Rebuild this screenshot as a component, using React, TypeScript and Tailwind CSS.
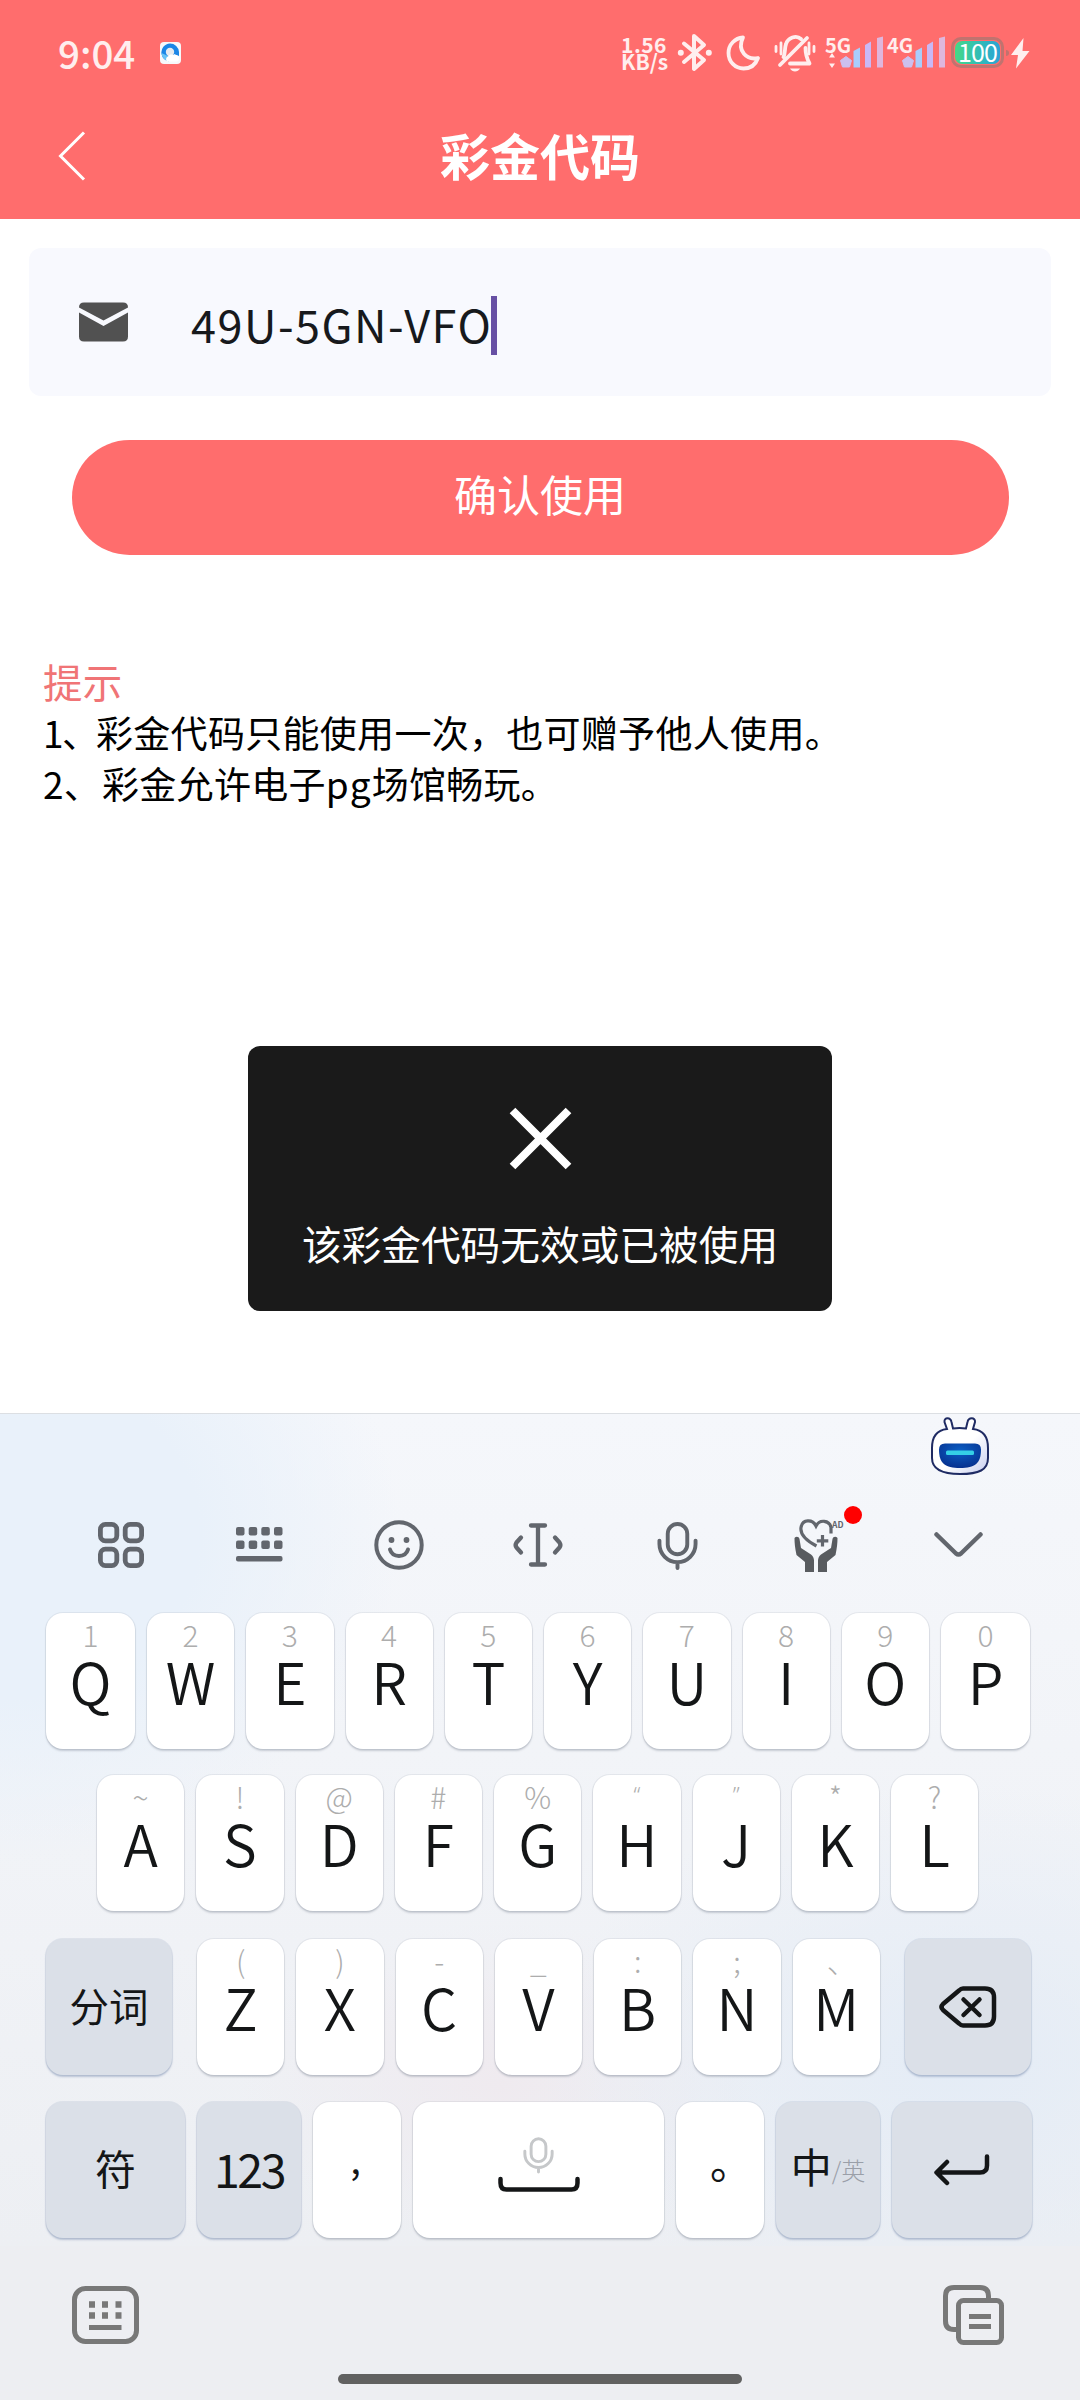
import React from "react";

type KeyDef = [letter: string, hint: string];

const ROW1: KeyDef[] = [
  ["Q", "1"], ["W", "2"], ["E", "3"], ["R", "4"], ["T", "5"],
  ["Y", "6"], ["U", "7"], ["I", "8"], ["O", "9"], ["P", "0"],
];
const ROW2: KeyDef[] = [
  ["A", "~"], ["S", "!"], ["D", "@"], ["F", "#"], ["G", "%"],
  ["H", "“"], ["J", "”"], ["K", "*"], ["L", "?"],
];
const ROW3: KeyDef[] = [
  ["Z", "("], ["X", ")"], ["C", "-"], ["V", "_"], ["B", ":"], ["N", ";"], ["M", "、"],
];

const WHITE_KEY =
  "h-[136px] rounded-[17px] bg-white shadow-[0_0_0_1px_rgba(120,130,150,0.12),0_2px_2px_rgba(90,100,120,0.28)]";
const GRAY_KEY =
  "flex h-[136px] items-center justify-center rounded-[17px] bg-[#dbe0e8] text-[#141617] shadow-[0_0_0_1px_rgba(150,165,190,0.2),0_2px_2px_rgba(120,140,175,0.45)]";

function hintStyle(hint: string) {
  if (hint === "“" || hint === "”") return "font-['Noto_Sans'] text-[22px] leading-[26px]";
  if (hint === "、") return "pl-[11px] text-[30px] leading-[30px]";
  return "text-[30px] leading-[30px]";
}

function LetterKey({ letter, hint, wide = false }: { letter: string; hint: string; wide?: boolean }) {
  return (
    <div className={`${WHITE_KEY} flex shrink-0 flex-col items-center pt-[6px] ${wide ? "w-[89px]" : "w-[87.250px]"}`}>
      <span className={`h-[30px] font-light text-[#adadad] ${hintStyle(hint)}`}>{hint}</span>
      <span className="mt-[2px] h-[58px] text-[57px] leading-[58px] font-[350] text-[#141617]">{letter}</span>
    </div>
  );
}

function SignalBars() {
  return (
    <svg className="block h-[32px] w-[46px]" viewBox="0 0 46 32">
      <path d="M8 20.500 13.500 24.500 11.500 31H4.500L2.500 24.500Z" fill="#ccc0ee" stroke="#ccc0ee" strokeWidth="1" strokeLinejoin="round" />
      <path d="M15.500 15 22 11.500V31.500H15.500Z" fill="#a9cdfb" />
      <path d="M27 9 33 5.500V31.500H27Z" fill="#c9b8f5" />
      <path d="M39 2 45 .5V31.500H39Z" fill="#dfb6dc" />
    </svg>
  );
}

function StatusBar() {
  return (
    <div className="flex h-[92px] items-start text-[#ffeeee]">
      <div className="ml-[58px] mt-[33px] w-[83px] text-[38.500px] leading-[38px] font-medium">9:04</div>
      <svg className="ml-[19px] mt-[42px] h-[22px] w-[21px]" viewBox="0 0 21 22">
        <rect width="21" height="22" rx="4" fill="#f7f8fa" />
        <path d="M1.500 12A9 9 0 0 1 10 1.500 9 9 0 0 1 19 10v4l-5-2-6 7A9 9 0 0 1 1.500 12Z" fill="#1b86e6" />
        <path d="M1.500 11A9 9 0 0 0 9 19.500L8 14Z" fill="#67c3f7" />
        <circle cx="10" cy="10" r="4.200" fill="#e6eaef" />
        <path d="M7 19.500a3 3 0 0 1 1-5 4 4 0 0 1 6-1 3 3 0 0 1 3 6Z" fill="#fff" />
      </svg>
      <div className="ml-[440px] mt-[36px] w-[50px] text-[21px] leading-[17px] font-bold">
        <div className="tracking-[0.5px]">1.56</div>
        <div>KB/s</div>
      </div>
      <svg className="ml-[6px] mt-[33px] h-[40px] w-[36px]" viewBox="0 0 36 40" fill="none" stroke="currentColor" strokeWidth="4" strokeLinejoin="round" strokeLinecap="round">
        <path d="M7 10.500 27 27 17 36V3L27 12 7 29" />
        <path d="M3.800 19.800h.01M31.800 19.800h.01" strokeWidth="6" />
      </svg>
      <svg className="ml-[12px] mt-[34px] h-[38px] w-[36px]" viewBox="0 0 36 38" fill="none" stroke="currentColor" strokeWidth="3.800" strokeLinejoin="round">
        <path d="M18 3.500C10 4 3.500 10.500 3.500 19S10 34.500 18.500 34.500c6.500 0 12-3.500 14.500-10.500C22 26.500 11.500 17 18 3.500Z" />
      </svg>
      <svg className="ml-[12px] mt-[33px] h-[40px] w-[44px]" viewBox="0 0 44 40" fill="none" stroke="currentColor" strokeWidth="3.800" strokeLinecap="round" strokeLinejoin="round">
        <path d="M34 5 7 32M10.500 24c2-4 1-9 2.500-13C15 5 23 1.500 28 6M32.500 15c0 6 .5 9 4 15.500H17" />
        <path d="M3 13.500v5M8 10v11M41 13.500v5M36 10v11" strokeWidth="2.800" />
        <path d="M17 35.500h10c-2 4-8 4-10 0Z" fill="currentColor" stroke="none" />
      </svg>
      <div className="relative ml-[9px] mt-[36px] h-[32px] w-[60px]">
        <div className="absolute left-[-1px] top-[-1px] text-[20px] leading-[20px] font-bold">5G</div>
        <svg className="absolute left-[3px] top-[17px] h-[15px] w-[6px]" viewBox="0 0 6 15" fill="currentColor">
          <path d="M3 0 6 4.500H0ZM3 15 0 10.500h6Z" />
        </svg>
        <div className="absolute left-[12px] top-0"><SignalBars /></div>
      </div>
      <div className="relative ml-[2px] mt-[36px] h-[32px] w-[60px]">
        <div className="absolute left-[-1px] top-[-1px] text-[20px] leading-[20px] font-bold">4G</div>
        <div className="absolute left-[12px] top-0"><SignalBars /></div>
      </div>
      <div className="ml-[3px] mt-[37px] flex h-[31px] w-[53px] items-center justify-center rounded-[10px] border-[3px] border-[#c0736f]">
        <div className="flex h-[23px] w-[45px] items-center justify-center rounded-[7px] bg-gradient-to-r from-[#46d884] to-[#2aa2d6] text-[25px] leading-[23px] font-normal text-white">
          <span className="-mt-[3px] tracking-[-0.8px]">100</span>
        </div>
      </div>
      <div className="ml-[2px] mt-[50px] h-[6px] w-[3px] rounded-r bg-[#c0736f]" />
      <svg className="ml-[2px] mt-[38px] h-[31px] w-[19px]" viewBox="0 0 19 31" fill="currentColor">
        <path d="M12.500 0 0 17h7L5 30.500 18.500 13H11.500Z" />
      </svg>
    </div>
  );
}

function MicGlyph({ className }: { className: string }) {
  return (
    <svg className={className} viewBox="0 0 42 50" fill="none" stroke="currentColor" strokeWidth="4" strokeLinecap="round">
      <rect x="11" y="3" width="20" height="31" rx="10" />
      <path d="M2.500 20v3.500a18.500 18.500 0 0 0 37 0V20M21 42v6" />
    </svg>
  );
}

function Toolbar() {
  return (
    <div className="flex h-[72px] items-center pl-[51px] text-[#62666d]">
      <div className="flex w-[139.200px] justify-center">
        <svg className="h-[46px] w-[46px]" viewBox="0 0 46 46" fill="none" stroke="currentColor" strokeWidth="4.800">
          <rect x="2.400" y="2.400" width="16.400" height="16.400" rx="5" />
          <rect x="27.200" y="2.400" width="16.400" height="16.400" rx="5" />
          <rect x="2.400" y="27.200" width="16.400" height="16.400" rx="5" />
          <rect x="27.200" y="27.200" width="16.400" height="16.400" rx="5" />
        </svg>
      </div>
      <div className="flex w-[139.200px] justify-center">
        <svg className="h-[36px] w-[47px]" viewBox="0 0 47 36" fill="currentColor">
          {[0, 12.700, 25.300, 38].map((x) => (
            <g key={x}>
              <rect x={x} y="0" width="8.500" height="8.500" rx="2" />
              <rect x={x} y="13.500" width="8.500" height="8.500" rx="2" />
            </g>
          ))}
          <rect y="29" width="46.500" height="5.500" rx="2" />
        </svg>
      </div>
      <div className="flex w-[139.200px] justify-center">
        <svg className="h-[50px] w-[50px]" viewBox="0 0 50 50" fill="none" stroke="currentColor" strokeWidth="4" strokeLinecap="round">
          <circle cx="25" cy="25" r="22.700" />
          <path d="M16 29.500c2.500 8.500 15.500 8.500 18 0" />
          <circle cx="17.500" cy="20" r="2.900" fill="currentColor" stroke="none" />
          <circle cx="32.500" cy="20" r="2.900" fill="currentColor" stroke="none" />
        </svg>
      </div>
      <div className="flex w-[139.200px] justify-center">
        <svg className="h-[44px] w-[52px]" viewBox="0 0 52 44" fill="none" stroke="currentColor" strokeWidth="4.300" strokeLinecap="round" strokeLinejoin="round">
          <path d="M19 2.500h14M26 2.500v39M19 41.500h14" />
          <path d="M9 14.500 4.500 19.500q-1.800 2.500 0 5L9 29.500M43 14.500l4.500 5q1.800 2.500 0 5L43 29.500" />
        </svg>
      </div>
      <div className="flex w-[139.200px] justify-center">
        <MicGlyph className="h-[49px] w-[41px]" />
      </div>
      <div className="relative flex w-[138px] justify-center">
        <svg className="h-[54px] w-[44px]" viewBox="0 0 44 54">
          <path d="M22.500 28C12 22.500 6 16 7 9.500 8.500 1 18.500 1 22 8c3.500-7 13.500-6 15 1.500v6" fill="none" stroke="#62666d" strokeWidth="3.200" />
          <path d="M28.500 17v11.500M22.800 22.800h11.500" stroke="#62666d" strokeWidth="3.200" />
          <path d="M.5 20C2 18 5 18.500 5.500 21l1.500 9 10 6.500c2 1.500 3 4 3 6V54H11V44L2.500 37C1 30 .5 25 .5 20ZM43.500 20c-1.500-2-4.500-1.500-5 1l-1.500 9-10 6.500c-2 1.500-3 4-3 6V54H33V44l8.500-7c1.500-7 2-12 2-17Z" fill="#585b5f" />
        </svg>
        <span className="absolute left-[85px] top-[1px] text-[8.500px] leading-[10px] font-bold text-[#62666d]">AD</span>
        <div className="absolute left-[97px] top-[-12px] h-[18px] w-[18px] rounded-full bg-[#ff0000]" />
      </div>
      <div className="flex w-[148px] justify-center">
        <svg className="h-[26px] w-[49px]" viewBox="0 0 49 26" fill="none" stroke="currentColor" strokeWidth="4.500" strokeLinecap="round" strokeLinejoin="round">
          <path d="M2.500 2.500 22 21.500q2.500 2 5 0L46.500 2.500" />
        </svg>
      </div>
    </div>
  );
}

function Robot() {
  return (
    <svg className="ml-[931px] block h-[58px] w-[58px]" viewBox="0 0 58 58">
      <defs>
        <radialGradient id="visor" cx="50%" cy="30%" r="70%">
          <stop offset="0" stopColor="#0c5fc4" />
          <stop offset="1" stopColor="#06308f" />
        </radialGradient>
        <linearGradient id="shell" x1="0" y1="0" x2="1" y2="1">
          <stop offset="0.550" stopColor="#ffffff" />
          <stop offset="1" stopColor="#c6cdef" />
        </linearGradient>
      </defs>
      <path d="M16 12 13.500 5c-.5-5 6-5 7 0L22 11.500c4-.5 9-.5 13 0L36.500 5c1-5 8-5 7.500 0L42 12c9 1 15 7 15 19v10c0 12-9 16-28 16S1 52 1 41V31C1 19 7 13 16 12Z" fill="url(#shell)" stroke="#1f2b63" strokeWidth="2" />
      <path d="M14 26.500h30q6 0 6 6c0 14-6 18.500-21 18.500S8 46.500 8 32.500q0-6 6-6Z" fill="url(#visor)" />
      <rect x="15" y="33.500" width="28" height="4.500" rx="1.500" fill="#35d0e6" />
    </svg>
  );
}

function Keyboard() {
  return (
    <div className="h-[987px] border-t border-[#dcdfe3] bg-[#edeef2]">
      <div className="h-[832px] pt-[3px] bg-[radial-gradient(ellipse_400px_330px_at_0px_120px,#e9f1fa_0%,#e9f1fa_50%,rgba(233,241,250,0)_100%),radial-gradient(ellipse_420px_280px_at_960px_650px,#e4ecf6_0%,rgba(228,236,246,0)_100%),radial-gradient(ellipse_260px_160px_at_500px_670px,#efeaef_0%,rgba(239,234,239,0)_100%),linear-gradient(180deg,#f5f7fb_0%,#f2f4f8_40%,#edeff3_100%)]">
        <Robot />
        <div className="h-[34px]" />
        <Toolbar />
        <div className="mt-[32px] flex gap-[12px] pl-[46px]">
          {ROW1.map(([l, h], i) => <LetterKey key={l} letter={l} hint={h} wide={i === 0 || i === 9} />)}
        </div>
        <div className="mt-[26px] flex gap-[12px] pl-[97px]">
          {ROW2.map(([l, h]) => <LetterKey key={l} letter={l} hint={h} />)}
        </div>
        <div className="mt-[28px] flex gap-[12px] pl-[46px]">
          <div className={`${GRAY_KEY} mr-[13px] w-[126px] pb-[5px] text-[39.500px] leading-[39px]`}>分词</div>
          {ROW3.map(([l, h]) => <LetterKey key={l} letter={l} hint={h} />)}
          <div className={`${GRAY_KEY} ml-[13px] w-[126px]`}>
            <svg className="h-[42px] w-[58px]" viewBox="0 0 58 42" fill="none" stroke="currentColor" strokeWidth="4.500" strokeLinecap="round" strokeLinejoin="round">
              <path d="M24 2.500H46q9 0 9 9v19q0 9-9 9H24q-2 0-4-2L4 24q-3-3 0-6L20 4.500q2-2 4-2Z" />
              <path d="m24.500 13.500 16 15.500m0-15.500L24.500 29" />
            </svg>
          </div>
        </div>
        <div className="mt-[27px] flex gap-[12px] pl-[46px]">
          <div className={`${GRAY_KEY} w-[139px] pb-[4px] text-[41px]`}>符</div>
          <div className={`${GRAY_KEY} w-[104px] pb-[5px] text-[46.500px] tracking-[-2.500px]`}>123</div>
          <div className={`${WHITE_KEY} w-[88px] pt-[35px] pr-[3px] text-center text-[38px] leading-[42px] text-[#141617]`}>,</div>
          <div className={`${WHITE_KEY} flex w-[251px] flex-col items-center pt-[34px]`}>
            <MicGlyph className="h-[38px] w-[31px] text-[#c6c8ca]" />
            <svg className="mt-[2px] h-[17px] w-[82px]" viewBox="0 0 82 17" fill="none" stroke="#141617" strokeWidth="4.500" strokeLinecap="round">
              <path d="M2.500 3v4q0 6.500 6 6.500h65q6 0 6-6.500V3" />
            </svg>
          </div>
          <div className={`${WHITE_KEY} w-[88px] pl-[34px] pt-[38px] text-[42px] leading-[42px] text-[#141617]`}>。</div>
          <div className={`${GRAY_KEY} w-[104px] pb-[11px]`}>
            <span className="text-[41px] leading-[40px]">中</span>
            <span className="mt-[10px] text-[24px] leading-[24px] font-light text-[#9a9fa8]">/英</span>
          </div>
          <div className={`${GRAY_KEY} w-[140px]`}>
            <svg className="h-[32px] w-[56px]" viewBox="0 0 56 32" fill="none" stroke="currentColor" strokeWidth="4.500" strokeLinecap="round" strokeLinejoin="round">
              <path d="M53 2.500v9q0 7-7 7H3M13 8 2.500 18.500 13 29" />
            </svg>
          </div>
        </div>
      </div>
      <div className="flex justify-between pl-[72px] pr-[76px] pt-[39px] text-[#787878]">
        <svg className="mt-[1px] h-[58px] w-[67px]" viewBox="0 0 67 58" fill="none" stroke="currentColor" strokeWidth="5">
          <rect x="2.500" y="2.500" width="62" height="53" rx="11" />
          <path d="M17 18.500h6M30 18.500h6M43.500 18.500h6M17 29.500h6M30 29.500h6M43.500 29.500h6" strokeWidth="6.300" />
          <path d="M17 41.500h32.500" />
        </svg>
        <svg className="h-[60px] w-[61px]" viewBox="0 0 61 60" fill="none" stroke="currentColor" strokeWidth="5">
          <rect x="15.500" y="15.500" width="43" height="42" rx="5" />
          <path d="M45.500 15V11q0-8.500-8.500-8.500H11Q2.500 2.500 2.500 11V36q0 8.500 8.500 8.500h4M26 31.500h22M26 41.500h22" />
        </svg>
      </div>
      <div className="mx-auto mt-[29px] h-[10px] w-[404px] rounded-full bg-[#616161]" />
    </div>
  );
}

export default function App() {
  return (
    <div className="relative flex h-[2400px] w-[1080px] flex-col overflow-hidden bg-white font-['Noto_Sans_CJK_SC',sans-serif]">
      <header className="h-[219px] bg-[#ff6d6d]">
        <StatusBar />
        <div className="relative flex h-[127px] items-center justify-center">
          <svg className="absolute left-[58px] top-[39px] h-[50px] w-[28px]" viewBox="0 0 28 50" fill="none" stroke="#fff" strokeWidth="3">
            <path d="M26 1.500 2.500 25 26 48.500" />
          </svg>
          <h1 className="-mt-[4px] text-[50px] leading-[56px] font-bold text-white">彩金代码</h1>
        </div>
      </header>

      <main className="flex-1">
        <div className="mx-[29px] mt-[29px] flex h-[148px] items-center rounded-[12px] bg-[#f8f9fe] pl-[50px]">
          <svg className="h-[40px] w-[49px]" viewBox="0 0 49 40" fill="#515151">
            <path d="M0 5.500Q0 .5 5 .5H44q5 0 5 5L24.500 18.500Z" />
            <path d="M0 10.500 24.500 24 49 10.500V34.500q0 5-5 5H5q-5 0-5-5Z" />
          </svg>
          <span className="ml-[63px] mt-[3px] w-[300px] whitespace-nowrap text-[45px] leading-[60px] tracking-[1.500px] text-[#17191c]">49U-5GN-VFO</span>
          <div className="mt-[6px] h-[59px] w-[6px] bg-[#6750a4]" />
        </div>

        <button className="mx-auto mt-[44px] flex h-[115px] w-[937px] items-center justify-center rounded-full bg-[#ff6d6d] pb-[8px] text-[43px] text-white">
          确认使用
        </button>

        <section className="ml-[43px] mt-[100px] text-[37px] leading-[51px] tracking-[0.3px] text-black">
          <h2 className="text-[39.500px] leading-[51px] text-[#f07476]">提示</h2>
          <p className="mt-[1px] flex whitespace-nowrap">
            <span className="w-[53px] tracking-[-1.500px]">1、</span>
            <span>彩金代码只能使用一次，也可赠予他人使用。</span>
          </p>
          <p className="flex whitespace-nowrap">
            <span className="w-[59px]">2、</span>
            <span>彩金允许电子<span className="tracking-[1px]">pg</span>场馆畅玩。</span>
          </p>
        </section>
      </main>

      <div className="absolute left-[248px] top-[1046px] flex h-[265px] w-[584px] flex-col items-center rounded-[12px] bg-[#1a1a1a] pt-[61px] text-white">
        <svg className="h-[63px] w-[63px]" viewBox="0 0 63 63" fill="none" stroke="currentColor" strokeWidth="8">
          <path d="m3.500 3.500 56 56m0-56-56 56" />
        </svg>
        <p className="mt-[48px] whitespace-nowrap text-[39.700px] leading-[50px]">该彩金代码无效或已被使用</p>
      </div>

      <Keyboard />
    </div>
  );
}
